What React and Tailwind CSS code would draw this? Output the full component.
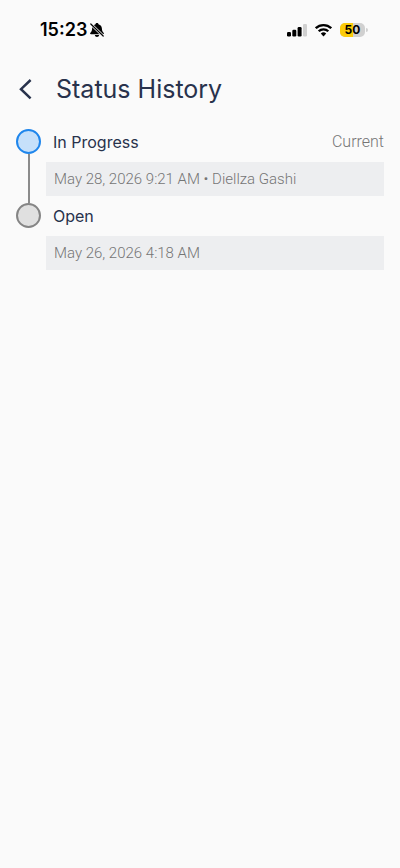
const history = [
  {
    id: 1,
    status: 'In Progress',
    detail: 'May 28, 2026 9:21 AM • Diellza Gashi',
    current: true
  },
  { id: 2, status: 'Open', detail: 'May 26, 2026 4:18 AM', current: false }
];

export default function App() {
  return (
    <div className="min-h-screen bg-[#fafafa] font-['Inter',sans-serif] text-[#28324c]">
      <StatusBar />
      <header className="flex h-15 items-center gap-5 px-4">
        <button type="button" aria-label="Back" className="flex h-8 w-5 items-center justify-center">
          <svg width="20" height="24" viewBox="0 0 20 24" fill="none" stroke="currentColor" strokeWidth="2.5">
            <path d="M14.6 2L5 11.2l9.6 9.2" />
          </svg>
        </button>
        <h1 className="text-[25px]">Status History</h1>
      </header>
      <main className="px-4 pt-[9px]">
        <ol>
          {history.map((entry, index) => (
            <HistoryEntry key={entry.id} entry={entry} last={index === history.length - 1} />
          ))}
        </ol>
      </main>
    </div>
  );
}

function HistoryEntry({ entry, last }) {
  return (
    <li className="flex gap-[5px]">
      <div className="flex w-[25px] flex-col items-center">
        <span
          className={
            entry.current
              ? 'size-[25px] rounded-full border-2 border-[#1f86ec] bg-[#c6e0fa]'
              : 'size-[25px] rounded-full border-2 border-[#858585] bg-[#e0e0e0]'
          }
        />
        {!last && <span className="w-0.5 flex-1 bg-[#8b8b8b]" />}
      </div>
      <div className="flex flex-1 flex-col gap-[7px] pb-[7px]">
        <div className="flex h-[26px] items-center justify-between pl-[7px]">
          <h2 className="text-base">{entry.status}</h2>
          {entry.current && (
            <span className="font-['Roboto',sans-serif] text-base font-light text-[#757575]">Current</span>
          )}
        </div>
        <p className="bg-[#edeef0] px-2 py-[7px] font-['Roboto',sans-serif] text-[15px] leading-5 font-light text-[#757575]">
          {entry.detail}
        </p>
      </div>
    </li>
  );
}

function StatusBar() {
  return (
    <div className="flex h-15 items-center justify-between pr-8 pl-10 text-black">
      <div className="flex items-center gap-0.5">
        <span className="text-lg font-semibold">15:23</span>
        <MutedBell />
      </div>
      <div className="flex items-center gap-2">
        <svg width="20" height="14" viewBox="0 0 20 14" fill="currentColor">
          <rect x="0" y="9" width="4" height="4.5" rx="1.2" />
          <rect x="5.3" y="6.8" width="4" height="6.7" rx="1.2" />
          <rect x="10.6" y="4" width="4" height="9.5" rx="1.2" />
          <rect x="16" y="1" width="4" height="12.5" rx="1.2" fill="#d0d0d0" />
        </svg>
        <svg width="17" height="14" viewBox="0 0 17 14" fill="none" stroke="currentColor" strokeWidth="2.3">
          <path d="M0.8 5.2a11 11 0 0 1 15.4 0" />
          <path d="M3.7 8.3a6.8 6.8 0 0 1 9.6 0" />
          <path d="M8.5 13.4L5.8 10.6a3.9 3.9 0 0 1 5.4 0z" fill="currentColor" stroke="none" />
        </svg>
        <Battery level={50} />
      </div>
    </div>
  );
}

function MutedBell() {
  return (
    <svg width="16" height="16" viewBox="0 0 16 16">
      <path
        fill="currentColor"
        d="M8 1c.8 0 1.4.5 1.5 1.2 2.1.6 3.3 2.2 3.4 4.3.1 2.2.6 3.2 1.7 4.2.6.6.3 1.5-.6 1.5H2c-.9 0-1.2-.9-.6-1.5 1.1-1 1.600-2 1.700-4.200.1-2.100 1.300-3.700 3.400-4.300C6.600 1.500 7.200 1 8 1zM5.800 13h4.400c-.2 1.200-1.100 1.900-2.200 1.900s-2-.7-2.200-1.900z"
      />
      <path d="M1.8 2l12.400 12" stroke="#fafafa" strokeWidth="2.6" />
      <path d="M1.8 2l12.400 12" stroke="currentColor" strokeWidth="1.2" strokeLinecap="round" />
    </svg>
  );
}

function Battery({ level }) {
  return (
    <div className="flex items-center gap-px">
      <div className="relative h-[14px] w-[25px] overflow-hidden rounded-[5px] bg-[#d0d0d0]">
        <div className="h-full bg-[#fccc0a]" style={{ width: `${level}%` }} />
        <span className="absolute inset-0 text-center text-xs leading-[14px] font-bold">{level}</span>
      </div>
      <span className="h-1 w-0.5 rounded-r-full bg-[#d0d0d0]" />
    </div>
  );
}
